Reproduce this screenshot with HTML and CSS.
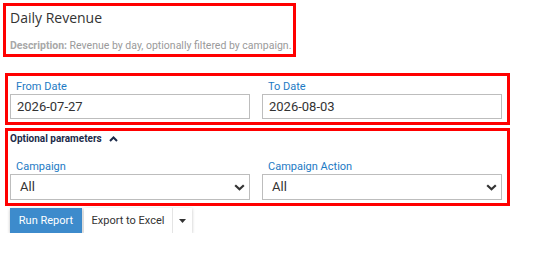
FILE: index.html
```html
<!DOCTYPE html>
<html>
<head>
<meta charset="utf-8">
<link rel="stylesheet" href="styles.css">
</head>
<body>
<div class="page">
  <section class="box head">
    <h1 class="title">Daily Revenue</h1>
    <p class="desc"><b>Description:</b> Revenue by day, optionally filtered by campaign.</p>
  </section>
  <section class="box dates">
    <div class="field">
      <label class="lbl">From Date</label>
      <div class="input">2026-07-27</div>
    </div>
    <div class="field">
      <label class="lbl">To Date</label>
      <div class="input">2026-08-03</div>
    </div>
  </section>
  <section class="box opts">
    <div class="opt-toggle">Optional parameters
      <svg class="caret-up" width="9" height="6" viewBox="0 0 9 6"><path d="M1 5 L4.5 1.5 L8 5" fill="none" stroke="#1c2b4a" stroke-width="2"/></svg>
    </div>
    <div class="row">
      <div class="field">
        <label class="lbl">Campaign</label>
        <div class="select">All
          <svg class="chev" width="11" height="7" viewBox="0 0 11 7"><path d="M1.2 1.2 L5.5 5.3 L9.8 1.2" fill="none" stroke="#333" stroke-width="2.2"/></svg>
        </div>
      </div>
      <div class="field">
        <label class="lbl">Campaign Action</label>
        <div class="select">All
          <svg class="chev" width="11" height="7" viewBox="0 0 11 7"><path d="M1.2 1.2 L5.5 5.3 L9.8 1.2" fill="none" stroke="#333" stroke-width="2.2"/></svg>
        </div>
      </div>
    </div>
  </section>
  <div class="actions">
    <button class="btn primary">Run Report</button>
    <div class="split">
      <button class="btn plain">Export to Excel</button>
      <button class="btn plain caret-btn"><svg width="7" height="4" viewBox="0 0 7 4"><path d="M0 0 H7 L3.5 4 Z" fill="#333"/></svg></button>
    </div>
  </div>
</div>
</body>
</html>
```

FILE: styles.css
```css
* { box-sizing: border-box; }
html, body { margin: 0; padding: 0; background: #fff; }
body { font-family: Roboto, "Liberation Sans", sans-serif; color: #333; }
.page { padding-top: 3px; }
.box { border: 3px solid #ff0000; }
.head {
  margin-left: 3px;
  width: 293px;
  height: 54px;
  padding: 2px 4px 0 4px;
}
.title {
  margin: 0;
  font-family: "Open Sans", sans-serif;
  font-weight: 400;
  font-size: 14px;
  line-height: 20px;
  color: #333;
}
.desc {
  margin: 11px 0 0 0;
  font-size: 10.5px;
  line-height: 14px;
  color: #9a9a9a;
  white-space: nowrap;
}
.desc b { color: #a8a8a8; font-weight: 700; }
.dates {
  margin: 16px 0 0 5px;
  width: 505px;
  height: 52px;
  padding: 4px 5px 0 2px;
  display: grid;
  grid-template-columns: 240px 240px;
  column-gap: 12px;
}
.field { display: flex; flex-direction: column; }
.lbl {
  font-size: 11px;
  line-height: 13px;
  color: #1d7ac4;
  padding-left: 6px;
  margin-bottom: 1px;
}
.input {
  height: 25px;
  border: 1px solid #bdbdbd;
  padding: 0 6px;
  font-size: 13px;
  line-height: 23px;
  color: #333;
}
.opts {
  margin: 3px 0 0 5px;
  width: 505px;
  height: 78px;
  padding: 1px 5px 0 2px;
}
.opt-toggle {
  font-size: 10px;
  font-weight: 700;
  line-height: 14px;
  color: #1c2b4a;
  display: flex;
  align-items: center;
}
.caret-up { margin-left: 7px; }
.row {
  margin-top: 14px;
  display: grid;
  grid-template-columns: 240px 240px;
  column-gap: 12px;
}
.select {
  height: 26px;
  border: 1px solid #bdbdbd;
  padding: 0 4px 0 9px;
  font-size: 13px;
  line-height: 24px;
  color: #333;
  display: flex;
  justify-content: space-between;
  align-items: center;
}
.actions {
  margin: 2px 0 0 10px;
  display: flex;
  gap: 2px;
}
.btn {
  height: 25px;
  border: 0;
  font-family: Roboto, sans-serif;
  font-size: 11px;
  padding: 0;
  white-space: nowrap;
  cursor: pointer;
}
.primary {
  background: #3d8bcc;
  color: #fff;
  width: 72px;
  box-shadow: 0 1px 3px rgba(0,0,0,0.25);
}
.split { display: flex; box-shadow: 0 1px 3px rgba(0,0,0,0.25); }
.plain { background: #fff; color: #333; width: 88px; }
.caret-btn { width: 20px; border-left: 1px solid #e4e4e4; display: flex; align-items: center; justify-content: center; }
```
